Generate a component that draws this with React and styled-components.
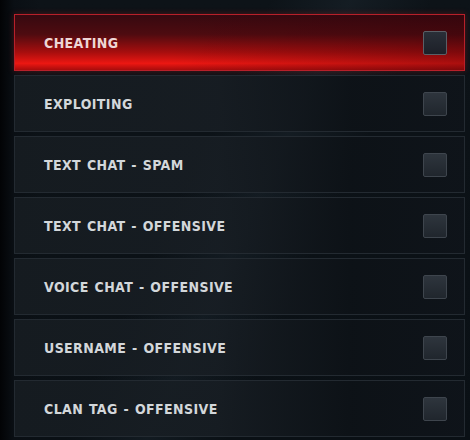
import styled, { createGlobalStyle } from "styled-components";

const Global = createGlobalStyle`
  html, body {
    margin: 0;
    padding: 0;
    background: #070a0d;
  }
`;

const Panel = styled.div`
  width: 470px;
  height: 440px;
  box-sizing: border-box;
  padding: 14px 5px 0 14px;
  display: flex;
  flex-direction: column;
  gap: 4px;
  overflow: hidden;
  background:
    linear-gradient(90deg, #020305 0px, #0a0f14 14px, transparent 40px),
    linear-gradient(115deg, transparent 40%, rgba(60, 80, 95, 0.16) 52%, transparent 64%),
    linear-gradient(180deg, #0d1318 0%, #0b1116 60%, #0a1015 100%);
  font-family: "DejaVu Sans Condensed", "DejaVu Sans", sans-serif;
`;

const Row = styled.div`
  height: 57px;
  box-sizing: border-box;
  display: flex;
  align-items: center;
  justify-content: space-between;
  padding: 0 17px 0 29px;
  border: 1px solid ${(p) => (p.$active ? "#b8202a" : "#232a31")};
  background: ${(p) =>
    p.$active
      ? `linear-gradient(90deg, rgba(0,0,0,0) 0%, rgba(0,0,0,0) 35%, rgba(50,0,8,0.35) 100%),
         linear-gradient(180deg, #360910 0%, #4e0b10 35%, #a80e0e 68%, #ec1712 88%, #a80c0c 100%)`
      : "linear-gradient(90deg, rgba(22,28,33,0.92) 0%, rgba(24,30,36,0.85) 45%, rgba(13,18,23,0.9) 75%, rgba(15,20,26,0.92) 100%)"};
  box-shadow: ${(p) => (p.$active ? "0 0 6px rgba(200, 20, 20, 0.35)" : "none")};
`;

const Label = styled.span`
  color: ${(p) => (p.$active ? "#eed6d6" : "#d3d7da")};
  font-size: 14px;
  font-weight: bold;
  letter-spacing: 0.4px;
  word-spacing: 1px;
  text-transform: uppercase;
`;

const Box = styled.span`
  width: 22px;
  height: 22px;
  border-radius: 2px;
  border: 1px solid ${(p) => (p.$active ? "#5a5f66" : "#3e454d")};
  background: ${(p) =>
    p.$active
      ? "linear-gradient(180deg, #2a2f38, #1d2028)"
      : "linear-gradient(180deg, #2e353d, #20262d)"};
`;

const items = [
  "Cheating",
  "Exploiting",
  "Text Chat - Spam",
  "Text Chat - Offensive",
  "Voice Chat - Offensive",
  "Username - Offensive",
  "Clan Tag - Offensive",
];

export default function App() {
  return (
    <>
      <Global />
      <Panel>
        {items.map((item, i) => (
          <Row key={item} $active={i === 0}>
            <Label $active={i === 0}>{item}</Label>
            <Box $active={i === 0} />
          </Row>
        ))}
      </Panel>
    </>
  );
}
